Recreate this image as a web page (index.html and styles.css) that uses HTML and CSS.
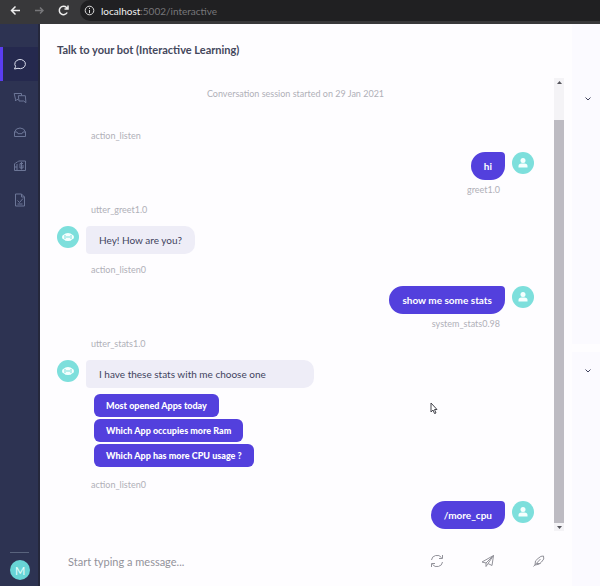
FILE: index.html
```html
<!DOCTYPE html>
<html lang="en">
<head>
<meta charset="utf-8">
<title>Talk to your bot</title>
<link rel="stylesheet" href="styles.css">
</head>
<body>
<header class="browser">
  <button class="nav-btn" aria-label="Back"><svg width="11" height="11" viewBox="0 0 11 11"><path d="M10 5.5H1.5M5.5 1.5l-4 4 4 4"/></svg></button>
  <button class="nav-btn dim" aria-label="Forward"><svg width="9" height="11" viewBox="0 0 9 11"><path d="M0 5.5h8M5 2.5l3 3-3 3"/></svg></button>
  <button class="nav-btn" aria-label="Reload"><svg width="11" height="11" viewBox="0 0 11 11"><path d="M9.200 7.500A4.200 4.200 0 1 1 8.500 2.500L10 4M10 .5V4H6.500"/></svg></button>
  <div class="address">
    <svg width="11" height="11" viewBox="0 0 11 11"><circle cx="5.5" cy="5.5" r="4.3"/><path d="M5.5 5v3.2M5.5 2.8v1.2"/></svg>
    <span><b>localhost</b>:5002/interactive</span>
  </div>
</header>
<div class="app">
  <nav class="sidebar">
    <a class="side-link active" href="#" aria-label="Interactive"><svg width="14" height="14" viewBox="0 0 14 14"><path d="M1.500 12 2.600 9.500A5.300 4.600 0 1 1 5 11.300Z"/></svg></a>
    <a class="side-link" href="#" aria-label="Conversations"><svg width="14" height="14" viewBox="0 0 14 14"><path d="M5 8.5H3.8L2.5 10V8.3L1.2 2.5h7.3v2M5.3 4.7h7l.5 5.3v1.8L10.8 10H6Z"/></svg></a>
    <a class="side-link" href="#" aria-label="Inbox"><svg width="14" height="14" viewBox="0 0 14 14"><path d="M1.500 7 3.500 4Q7 2 10.500 4l2 3v4.500h-11ZM1.500 7H4l1 1.700h4L10 7h2.500"/></svg></a>
    <a class="side-link" href="#" aria-label="Models"><svg width="14" height="14" viewBox="0 0 14 14"><path d="M1.500 5 3 3.500h1L5.500 2h7v9.500h-11ZM4 5v6M1.500 8H4M10 4.500H7v4.500h3M8.500 3v7.500M10 6v3"/></svg></a>
    <a class="side-link" href="#" aria-label="Training"><svg width="14" height="16" viewBox="0 0 14 16"><path d="M2.500 2h6l3 3v9h-9ZM8.500 2v3h3M4.500 8.500l2 2 3.500-4M4.500 12h5"/></svg></a>
    <div class="account"><button class="profile">M</button></div>
  </nav>
  <main class="chat">
    <h1>Talk to your bot (Interactive Learning)</h1>
    <div class="viewport">
      <div class="messages">
        <p class="session">Conversation session started on 29 Jan 2021</p>
        <p class="tag first">action_listen</p>
        <div class="row user"><div class="bubble">hi</div><span class="avatar"><svg width="12" height="12" viewBox="0 0 12 12"><circle cx="6" cy="3.500" r="2.500"/><path d="M1.500 10.500V9q0-2.500 3-2.500h3q3 0 3 2.500v1.500Z"/></svg></span></div>
        <p class="tag right">greet1.0</p>
        <p class="tag">utter_greet1.0</p>
        <div class="row bot"><span class="avatar"><svg width="12" height="12" viewBox="0 0 12 12"><path d="M0 6q0-2 2-2.500Q3 2 6 2t4 1.500Q12 4 12 6t-2 2.500Q9 10 6 10T2 8.500Q0 8 0 6Z"/><path class="face" d="M3 4v4M9 4v4M5 5v2M7 5v2"/></svg></span><div class="bubble">Hey! How are you?</div></div>
        <p class="tag">action_listen0</p>
        <div class="row user"><div class="bubble">show me some stats</div><span class="avatar"><svg width="12" height="12" viewBox="0 0 12 12"><circle cx="6" cy="3.500" r="2.500"/><path d="M1.500 10.500V9q0-2.500 3-2.500h3q3 0 3 2.500v1.500Z"/></svg></span></div>
        <p class="tag right">system_stats0.98</p>
        <p class="tag">utter_stats1.0</p>
        <div class="row bot"><span class="avatar"><svg width="12" height="12" viewBox="0 0 12 12"><path d="M0 6q0-2 2-2.500Q3 2 6 2t4 1.500Q12 4 12 6t-2 2.500Q9 10 6 10T2 8.500Q0 8 0 6Z"/><path class="face" d="M3 4v4M9 4v4M5 5v2M7 5v2"/></svg></span><div class="bubble wide">I have these stats with me choose one</div></div>
        <div class="choices">
          <button>Most opened Apps today</button>
          <button>Which App occupies more Ram</button>
          <button>Which App has more CPU usage ?</button>
        </div>
        <p class="tag">action_listen0</p>
        <div class="row user"><div class="bubble">/more_cpu</div><span class="avatar"><svg width="12" height="12" viewBox="0 0 12 12"><circle cx="6" cy="3.500" r="2.500"/><path d="M1.500 10.500V9q0-2.500 3-2.500h3q3 0 3 2.500v1.500Z"/></svg></span></div>
      </div>
      <div class="scrollbar">
        <svg width="5" height="3" viewBox="0 0 5 3"><path d="M0 3 2.500 0 5 3Z"/></svg>
        <div class="thumb"></div>
        <svg width="5" height="3" viewBox="0 0 5 3"><path d="M0 0h5L2.500 3Z"/></svg>
      </div>
    </div>
    <form class="composer">
      <input type="text" placeholder="Start typing a message..." aria-label="Message">
      <button type="button" aria-label="Restart"><svg width="14" height="14" viewBox="0 0 14 14"><path d="M1.500 6a5.500 5 0 0 1 10-2.500M12.500 1v3.500H9M12.500 8a5.500 5 0 0 1-10 2.500M1.500 13V9.500H5"/></svg></button>
      <button type="button" aria-label="Send"><svg width="14" height="14" viewBox="0 0 14 14"><path d="M1 8 12.500 1.500 11 11.500 7 9.500 5 12.500V9ZM5 9l7.500-7.500L7 9.500"/></svg></button>
      <button type="button" aria-label="Edit"><svg width="14" height="14" viewBox="0 0 14 14"><path d="M1.500 12.500 8.500 5M3 11Q2.500 6 6 4.500 9 1.500 11.500 2q1.500 3-2 6Q7.500 11 3 11ZM5 9.500h3.500"/></svg></button>
    </form>
  </main>
  <aside class="panels">
    <section><button aria-label="Expand slots"><svg width="8" height="6" viewBox="0 0 8 6"><path d="M1.500 1.500 4 4l2.500-2.500"/></svg></button></section>
    <section><button aria-label="Expand story"><svg width="8" height="6" viewBox="0 0 8 6"><path d="M1.500 1.500 4 4l2.500-2.500"/></svg></button></section>
  </aside>
</div>
<svg class="cursor" width="8" height="13" viewBox="0 0 8 13"><path d="M1 1v9l2-2 1.500 3.500 1.500-.5L4.500 7.500H7Z"/></svg>
</body>
</html>
```
FILE: styles.css
```css
* { box-sizing: border-box; }
body {
  margin: 0;
  height: 100vh;
  display: flex;
  flex-direction: column;
  font-family: Lato, "Liberation Sans", sans-serif;
  font-size: 10px;
  color: #41435e;
  background: #fefdff;
}
button { border: 0; padding: 0; background: none; font: inherit; color: inherit; }
svg { display: block; fill: none; stroke: currentColor; }
p, h1 { margin: 0; }

.browser {
  flex: none;
  display: flex;
  align-items: center;
  gap: 14px;
  height: 24px;
  padding: 0 0 3px 10px;
  background: #38383a;
  color: #eee;
}
.nav-btn svg { stroke-width: 1.5; }
.browser .dim { color: #77777a; }
.address {
  flex: 1;
  align-self: stretch;
  display: flex;
  align-items: center;
  gap: 6px;
  margin-left: -3px;
  padding-left: 4px;
  border-radius: 10px 0 0 10px;
  background: #202022;
  color: #77777a;
}
.address svg { color: #ddd; }
.address b { font-weight: 400; color: #f2f2f2; }

.app {
  flex: 1;
  min-height: 0;
  display: grid;
  grid-template-columns: 40px 1fr 36px;
}
.sidebar {
  display: flex;
  flex-direction: column;
  padding-top: 23px;
  background: #2d3352;
  border-right: 2px solid #25283c;
}
.side-link {
  display: flex;
  align-items: center;
  justify-content: center;
  height: 34px;
  padding-left: 2px;
  color: #6c7697;
}
.side-link.active {
  color: #dfe2f0;
  background: #25294e;
  border-left: 3px solid #5a3df0;
  padding: 0 1px 0 0;
}
.account {
  margin: auto 9px 6px 10px;
  padding-top: 7px;
  border-top: 1px solid #59637d;
}
.profile {
  display: block;
  width: 20px;
  height: 20px;
  border-radius: 50%;
  background: #68d4d5;
  color: #e8ffff;
  font-size: 11px;
}

.chat {
  min-width: 0;
  display: flex;
  flex-direction: column;
}
h1 {
  padding: 18px 17px 20px;
  font-size: 11px;
  line-height: 16px;
  font-weight: 700;
  color: #44475c;
}
.viewport {
  flex: 1;
  min-height: 0;
  display: flex;
}
.messages {
  flex: 1;
  overflow: hidden;
  padding: 10px 20px 0 17px;
}
.session, .tag {
  font-size: 9px;
  line-height: 12px;
  color: #b0b0b8;
}
.session { text-align: center; }
.tag { margin: 8px 0 0 34px; }
.tag.first { margin-top: 30px; }
.tag.right { margin: 4px 34px 0 0; text-align: right; }
.row {
  display: flex;
  align-items: flex-start;
  gap: 7px;
  margin-top: 10px;
}
.row + .tag { margin-top: 10px; }
.row + .tag.right { margin-top: 4px; }
.user { justify-content: flex-end; }
.bubble {
  padding: 6px 13px;
  line-height: 16px;
}
.user .bubble {
  border-radius: 14px 4px 14px 14px;
  background: #5340dd;
  color: #fff;
  font-weight: 700;
}
.bot .bubble {
  border-radius: 4px 10px 10px 4px;
  background: #eeedf7;
}
.bot .bubble.wide { padding-right: 48px; }
.avatar {
  flex: none;
  display: grid;
  place-items: center;
  width: 22px;
  height: 22px;
  border-radius: 50%;
  background: #7ddfdc;
}
.avatar svg { fill: #f5fffe; stroke: none; }
.avatar .face { stroke: #7ddfdc; }
.choices {
  display: flex;
  flex-direction: column;
  align-items: flex-start;
  gap: 2px;
  margin: 6px 0 12px 37px;
}
.choices button {
  padding: 0 12px;
  font-size: 9px;
  line-height: 23px;
  border-radius: 6px;
  background: #5340dd;
  color: #fff;
  font-weight: 900;
}
.scrollbar {
  width: 10px;
  display: flex;
  flex-direction: column;
  align-items: center;
  padding: 3px 0 2px;
  background: #f4f3f6;
}
.scrollbar svg { fill: #55555c; stroke: none; }
.thumb {
  flex: 1;
  align-self: stretch;
  margin: 36px 0 3px;
  background: #bdbbc2;
}
.composer {
  flex: none;
  display: flex;
  align-items: center;
  gap: 37px;
  height: 55px;
  padding: 5px 18px 0 28px;
  color: #92929a;
}
.composer input {
  flex: 1;
  min-width: 0;
  border: 0;
  padding: 0;
  outline: 0;
  background: none;
  font: 11px Lato, sans-serif;
}
.composer input::placeholder { color: #92929a; }

.panels {
  display: flex;
  flex-direction: column;
  gap: 8px;
  padding-left: 8px;
}
.panels section {
  flex: 1;
  padding: 12px 0 0 12px;
  background: #fbfaff;
}
.panels section:first-child { flex: 0 0 57%; padding-top: 68px; }
.cursor {
  position: absolute;
  left: 430px;
  top: 402px;
  fill: #fff;
  stroke: #44444c;
}
```
